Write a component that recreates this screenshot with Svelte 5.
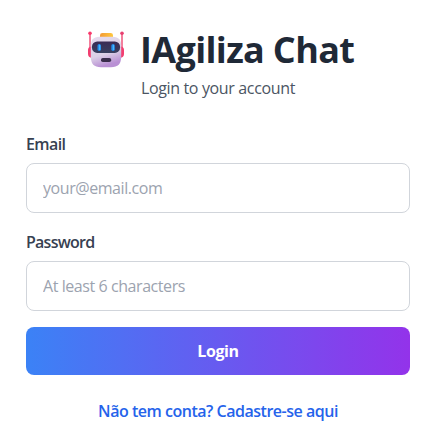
<script>
  let email = $state('');
  let password = $state('');
</script>

<main>
  <header>
    <h1>
      <svg class="robot" viewBox="0 0 40 40" aria-hidden="true">
        <defs>
          <linearGradient id="head" x1="0" y1="0" x2="0.3" y2="1">
            <stop offset="0" stop-color="#e6dcee" />
            <stop offset="0.65" stop-color="#dbd0e6" />
            <stop offset="1" stop-color="#b990d4" />
          </linearGradient>
          <linearGradient id="visor" x1="0" y1="0" x2="0" y2="1">
            <stop offset="0" stop-color="#3a2b55" />
            <stop offset="1" stop-color="#38405f" />
          </linearGradient>
          <linearGradient id="cap" x1="0" y1="0" x2="1" y2="0">
            <stop offset="0" stop-color="#f29a36" />
            <stop offset="1" stop-color="#ffc83d" />
          </linearGradient>
        </defs>
        <path d="M4 5V20M36 5V20" stroke="#ed3b68" stroke-width="1.3" />
        <circle cx="4" cy="4.2" r="1.8" fill="#f9386b" />
        <circle cx="36" cy="4.2" r="1.8" fill="#e83f70" />
        <path d="M6 17.5H4.8Q2 18 2 21V25Q2 28.5 6 28.8ZM34 17.5H35.2Q38 18 38 21V25Q38 28.5 34 28.8Z" fill="#f23e70" />
        <rect x="14" y="3.9" width="13" height="6" rx="2.4" fill="url(#cap)" />
        <path d="M13.5 7.8H26.5C33 7.8 35.2 11.5 35.2 17.5V27.5C35.2 35 32 38.2 25 38.2H15C8 38.2 4.8 35 4.8 27.5V17.5C4.8 11.5 7 7.8 13.5 7.8Z" fill="url(#head)" />
        <rect x="5.9" y="12.5" width="28.2" height="11.4" rx="5.3" fill="url(#visor)" />
        <rect x="11.5" y="15" width="3.5" height="7" rx="1.7" fill="#248ceb" />
        <rect x="25.3" y="15" width="3.5" height="7" rx="1.7" fill="#248ceb" />
        <path d="M13.6 16.3V20.4M27.4 16.3V20.4" stroke="#47b9ff" stroke-width="1.2" stroke-linecap="round" />
        <rect x="15" y="29" width="10.2" height="4" rx="1.8" fill="#392d4b" />
      </svg>
      <span class="title">IAgiliza Chat</span>
    </h1>
    <p><span class="subtitle">Login to your account</span></p>
  </header>

  <form>
    <label class="email-label" for="email">Email</label>
    <input id="email" type="email" placeholder="your@email.com" bind:value={email} />
    <label class="password-label" for="password">Password</label>
    <input id="password" type="password" placeholder="At least 6 characters" bind:value={password} />
    <button type="button">Login</button>
  </form>

  <a href="#register">Não tem conta? Cadastre-se aqui</a>
</main>

<style>
  :global(body) { margin: 0; background: #fff; }
  main {
    box-sizing: border-box;
    height: 446px;
    padding: 29px 28px 0 26px;
    font-family: "Segoe UI", "Open Sans", sans-serif;
    font-size: 16px;
    line-height: 24px;
    color: #1f2937;
    overflow: hidden;
  }
  header { text-align: center; }
  h1 {
    display: flex;
    align-items: center;
    justify-content: flex-start;
    height: 40px;
    margin: 0;
    padding-left: 60px;
    gap: 14px;
    font-size: 36px;
    line-height: 40px;
    font-weight: 700;
  }
  .robot { width: 40px; height: 40px; flex: none; }
  .title { padding-top: 2px; white-space: nowrap; letter-spacing: -0.65px; }
  p { margin: 7px 0 0; color: #4b5563; }
  .subtitle { letter-spacing: -0.35px; }
  form { display: flex; flex-direction: column; margin-top: 32px; }
  label { margin-bottom: 7px; color: #374151; font-weight: 600; }
  .email-label { letter-spacing: -0.6px; }
  .password-label { letter-spacing: -0.75px; }
  input {
    box-sizing: border-box;
    height: 50px;
    margin: 0 0 17px;
    padding: 0 16px;
    border: 1px solid #d1d5db;
    border-radius: 8px;
    background: #fff;
    font: inherit;
    letter-spacing: -0.43px;
    outline: none;
  }
  #password { margin-bottom: 16px; }
  input::placeholder { color: #9ca3af; opacity: 1; }
  button {
    height: 48px;
    padding: 0;
    border: 0;
    border-radius: 8px;
    color: #fff;
    font: inherit;
    font-weight: 700;
    letter-spacing: -0.4px;
    background: linear-gradient(to right, #3b82f6, #9333ea);
  }
  a {
    display: block;
    margin-top: 24px;
    color: #2563eb;
    font-weight: 600;
    letter-spacing: -0.48px;
    text-align: center;
    text-decoration: none;
    white-space: nowrap;
  }
</style>
